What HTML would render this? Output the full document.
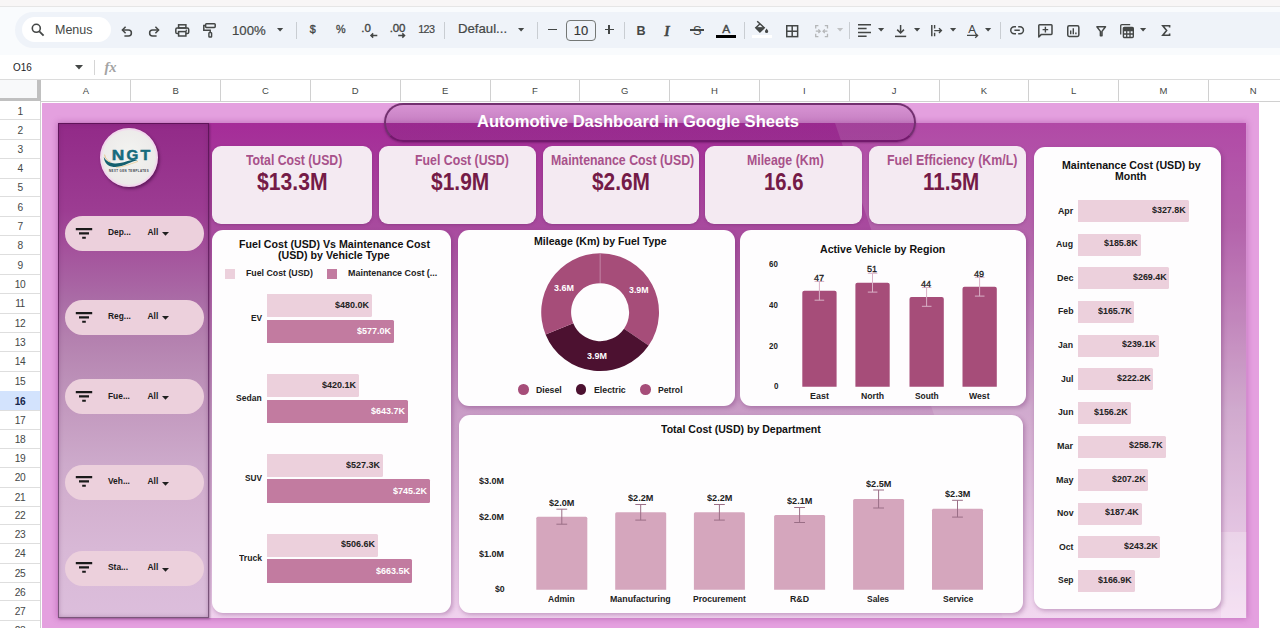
<!DOCTYPE html>
<html><head><meta charset="utf-8"><title>Automotive Dashboard</title>
<style>
*{box-sizing:border-box;margin:0;padding:0}
html,body{width:1280px;height:628px;overflow:hidden;background:#fff;font-family:"Liberation Sans",sans-serif;}
body{position:relative}
.abs{position:absolute}
.t{position:absolute;white-space:nowrap;line-height:1}
.c{text-align:center}
.b{font-weight:bold}
.card{position:absolute;background:#fefdfe;border-radius:11px;box-shadow:1.5px 2px 4px rgba(100,30,100,.3)}
.kpi{position:absolute;background:#f4eaf2;border-radius:9px;box-shadow:0 1px 3px rgba(90,30,90,.3)}
.pill{position:absolute;left:65px;width:139px;height:35px;border-radius:18px;background:#ecd0dc}
.sep{position:absolute;top:21px;width:1px;height:18px;background:#c7c7c7}
svg{position:absolute;overflow:visible}
</style></head><body>

<div class="abs" style="left:0;top:0;width:1280px;height:7px;background:#f8f6f6"></div>
<div class="abs" style="left:0;top:6px;width:1280px;height:1px;background:#e6e6e6"></div>
<div class="abs" style="left:0;top:7px;width:1280px;height:48px;background:#f9fbfd"></div>
<div class="abs" style="left:15px;top:12px;width:1300px;height:36px;background:#eff3f9;border-radius:18px"></div>
<div class="abs" style="left:22px;top:17px;width:89px;height:25px;background:#fff;border-radius:13px"></div>
<div class="abs" style="left:0;top:55px;width:1280px;height:25px;background:#fff"></div>
<div class="abs" style="left:0;top:79px;width:1280px;height:1px;background:#dcdcdc"></div>
<svg style="left:31px;top:23px" width="14" height="14" viewBox="0 0 14 14"><circle cx="5.3" cy="5.3" r="4" fill="none" stroke="#444746" stroke-width="1.6"/><path d="M8.3 8.3L12.6 12.6" stroke="#444746" stroke-width="1.8" stroke-linecap="butt"/></svg>
<div class="t" style="left:54.50px;top:22.90px;font-size:13.4px;font-weight:normal;color:#444746;transform:scaleX(0.9325);transform-origin:0 0;">Menus</div>
<svg style="left:120.5px;top:26px" width="12" height="11" viewBox="0 0 12 11"><path d="M4.6 0.8L1.4 4l3.2 3.2" fill="none" stroke="#444746" stroke-width="1.5"/><path d="M1.6 4H7.4a3 3 0 0 1 0 6H3.4" fill="none" stroke="#444746" stroke-width="1.5"/></svg>
<svg style="left:148px;top:26px" width="12" height="11" viewBox="0 0 12 11"><path d="M7.4 0.8L10.6 4l-3.2 3.2" fill="none" stroke="#444746" stroke-width="1.5"/><path d="M10.4 4H4.6a3 3 0 0 0 0 6H8.6" fill="none" stroke="#444746" stroke-width="1.5"/></svg>
<svg style="left:175px;top:24px" width="14.5" height="13" viewBox="0 0 14.5 13"><rect x="3.6" y="0.8" width="7.3" height="3.2" fill="none" stroke="#444746" stroke-width="1.5"/><rect x="0.8" y="4" width="12.9" height="5.6" rx="1.4" fill="none" stroke="#444746" stroke-width="1.5"/><rect x="3.6" y="7.6" width="7.3" height="4.4" fill="#eff3f9" stroke="#444746" stroke-width="1.5"/><circle cx="11.3" cy="6.2" r="0.8" fill="#444746"/></svg>
<svg style="left:202.5px;top:23.2px" width="13.5" height="15" viewBox="0 0 13.5 15"><rect x="2.6" y="0.8" width="9.6" height="3.6" rx="0.8" fill="none" stroke="#444746" stroke-width="1.5"/><path d="M2.6 2.6H0.8V7.2H7.2V9.6" fill="none" stroke="#444746" stroke-width="1.5"/><rect x="5.9" y="9.6" width="2.7" height="4.4" rx="0.6" fill="none" stroke="#444746" stroke-width="1.4"/></svg>
<div class="t" style="left:232px;top:23.6px;font-size:13.2px;-webkit-text-stroke:.2px #444746;color:#444746">100%</div>
<svg style="left:276.8px;top:27.8px" width="6.2" height="3.8" viewBox="0 0 6.2 3.8"><path d="M0 0h6.2l-3.1 3.6z" fill="#444746"/></svg>
<div class="abs" style="left:295.5px;top:21.5px;width:1px;height:17px;background:#c9cdd2"></div>
<div class="t" style="left:309.7px;top:23.8px;font-size:10.8px;-webkit-text-stroke:.35px #444746;color:#444746">$</div>
<div class="t" style="left:336px;top:24px;font-size:10.8px;-webkit-text-stroke:.3px #444746;color:#444746">%</div>
<div class="t" style="left:361.3px;top:22.8px;font-size:11.5px;-webkit-text-stroke:.35px #444746;color:#444746">.0</div>
<svg style="left:369.5px;top:33px" width="7.5" height="5" viewBox="0 0 7.5 5"><path d="M7.3 2.5H1.2M3.2 0.4L1 2.5l2.2 2.1" fill="none" stroke="#444746" stroke-width="1.5"/></svg>
<div class="t" style="left:389.8px;top:22.8px;font-size:11.5px;letter-spacing:-.2px;-webkit-text-stroke:.35px #444746;color:#444746">.00</div>
<svg style="left:397.5px;top:33px" width="7.5" height="5" viewBox="0 0 7.5 5"><path d="M0.2 2.5H6.3M4.3 0.4L6.5 2.5l-2.2 2.1" fill="none" stroke="#444746" stroke-width="1.5"/></svg>
<div class="t" style="left:418.3px;top:24px;font-size:10.8px;letter-spacing:-.7px;-webkit-text-stroke:.2px #444746;color:#444746">123</div>
<div class="abs" style="left:444px;top:21.5px;width:1px;height:17px;background:#c9cdd2"></div>
<div class="t" style="left:458px;top:22.4px;font-size:13.2px;-webkit-text-stroke:.2px #444746;color:#444746">Defaul...</div>
<svg style="left:517.9px;top:27.8px" width="6.2" height="3.8" viewBox="0 0 6.2 3.8"><path d="M0 0h6.2l-3.1 3.6z" fill="#444746"/></svg>
<div class="abs" style="left:537.3px;top:21.5px;width:1px;height:17px;background:#c9cdd2"></div>
<div class="abs" style="left:547.8px;top:29.2px;width:8.8px;height:1.25px;background:#444746"></div>
<div class="abs" style="left:566.2px;top:20px;width:29.5px;height:20.6px;border:1px solid #747775;border-radius:4px"></div>
<div class="t c" style="left:566.2px;width:29.5px;top:23.6px;font-size:13px;-webkit-text-stroke:.15px #333;color:#333">10</div>
<div class="abs" style="left:604.5px;top:29.2px;width:9px;height:1.25px;background:#444746"></div>
<div class="abs" style="left:608.4px;top:25.3px;width:1.25px;height:9px;background:#444746"></div>
<div class="abs" style="left:623.6px;top:21.5px;width:1px;height:17px;background:#c9cdd2"></div>
<div class="t b" style="left:636.5px;top:24.6px;font-size:12.6px;color:#444746">B</div>
<div class="t b" style="left:664.3px;top:23.8px;font-size:14.2px;-webkit-text-stroke:.3px #444746;font-style:italic;color:#444746;font-family:'Liberation Serif',serif">I</div>
<div class="t" style="left:693px;top:24.8px;font-size:12.8px;color:#444746">S</div>
<div class="abs" style="left:690px;top:29.2px;width:14px;height:1.4px;background:#444746"></div>
<div class="t" style="left:722.2px;top:24.4px;font-size:11.8px;-webkit-text-stroke:.4px #444746;color:#444746">A</div>
<div class="abs" style="left:716.3px;top:35.4px;width:19.8px;height:3px;background:#000"></div>
<div class="abs" style="left:744.2px;top:21.5px;width:1px;height:17px;background:#c9cdd2"></div>
<svg style="left:0px;top:0px" width="1280" height="60" viewBox="0 0 1280 60"><path d="M757.2 21.2L764.2 27.8 759.9 31.9 755.8 27.8 759.6 24.2" fill="none" stroke="#444746" stroke-width="1.5"/><path d="M756 27.6H764L759.9 31.8z" fill="#444746" stroke="#444746" stroke-width="0.8"/><path d="M766.6 28.6c1 1.4 1.6 2.1 1.6 2.9a1.6 1.6 0 0 1-3.2 0c0-.8.6-1.5 1.6-2.9z" fill="#444746"/></svg>
<div class="abs" style="left:752.4px;top:35.4px;width:19.8px;height:3px;background:#fff"></div>
<svg style="left:786px;top:24.6px" width="12.4" height="12.4" viewBox="0 0 12.4 12.4"><rect x="0.75" y="0.75" width="10.9" height="10.9" fill="none" stroke="#444746" stroke-width="1.5"/><path d="M6.2 0.8V11.6M0.8 6.2H11.6" stroke="#444746" stroke-width="1.5"/></svg>
<svg style="left:814.8px;top:24.6px" width="13.2" height="12.4" viewBox="0 0 13.2 12.4"><path d="M3.4 0.7H0.7V3.6M9.8 0.7h2.7V3.6M3.4 11.7H0.7V8.8M9.8 11.7h2.7V8.8" fill="none" stroke="#b4b6b8" stroke-width="1.3"/><path d="M0.8 6.2H5M3.4 4.4L5.2 6.2 3.4 8M12.4 6.2H8.2M9.8 4.4L8 6.2 9.8 8" fill="none" stroke="#b4b6b8" stroke-width="1.2"/></svg>
<svg style="left:836.6px;top:27.8px" width="6.2" height="3.8" viewBox="0 0 6.2 3.8"><path d="M0 0h6.2l-3.1 3.6z" fill="#c0c2c4"/></svg>
<div class="abs" style="left:849px;top:21.5px;width:1px;height:17px;background:#c9cdd2"></div>
<svg style="left:858px;top:24.4px" width="13" height="13" viewBox="0 0 13 13"><path d="M0 0.8H13M0 4.6H8.6M0 8.4H13M0 12.2H8.6" stroke="#444746" stroke-width="1.5"/></svg>
<svg style="left:877.5px;top:27.8px" width="6.2" height="3.8" viewBox="0 0 6.2 3.8"><path d="M0 0h6.2l-3.1 3.6z" fill="#444746"/></svg>
<svg style="left:894.6px;top:24.6px" width="11.2" height="12.4" viewBox="0 0 11.2 12.4"><path d="M5.6 0V7.6M2.2 4.6L5.6 8l3.4-3.4" fill="none" stroke="#444746" stroke-width="1.5"/><path d="M0 11.4H11.2" stroke="#444746" stroke-width="1.5"/></svg>
<svg style="left:913.7px;top:27.8px" width="6.2" height="3.8" viewBox="0 0 6.2 3.8"><path d="M0 0h6.2l-3.1 3.6z" fill="#444746"/></svg>
<svg style="left:930.5px;top:25px" width="11.4" height="11.2" viewBox="0 0 11.4 11.2"><path d="M0.8 0V11.2" stroke="#444746" stroke-width="1.5"/><path d="M3.6 0V3.4M3.6 7.8V11.2" stroke="#444746" stroke-width="1.4"/><path d="M3.2 5.6H10.4M8 3.2L10.4 5.6 8 8" fill="none" stroke="#444746" stroke-width="1.4"/></svg>
<svg style="left:949.8px;top:27.8px" width="6.2" height="3.8" viewBox="0 0 6.2 3.8"><path d="M0 0h6.2l-3.1 3.6z" fill="#444746"/></svg>
<div class="t" style="left:968.3px;top:23.6px;font-size:11.5px;color:#444746">A</div>
<svg style="left:967.2px;top:32.5px" width="11.8" height="5" viewBox="0 0 11.8 5"><path d="M0 2.4H10.2M8.2 0.3L10.6 2.5 8.2 4.7" fill="none" stroke="#444746" stroke-width="1.3"/></svg>
<svg style="left:985.3px;top:27.8px" width="6.2" height="3.8" viewBox="0 0 6.2 3.8"><path d="M0 0h6.2l-3.1 3.6z" fill="#444746"/></svg>
<div class="abs" style="left:999.6px;top:21.5px;width:1px;height:17px;background:#c9cdd2"></div>
<svg style="left:1010px;top:26.2px" width="14.2" height="8.6" viewBox="0 0 14.2 8.6"><path d="M6 0.8H4.2a3.4 3.4 0 0 0 0 6.9H6M8.2 0.8H10a3.4 3.4 0 0 1 0 6.9H8.2M4.4 4.25H9.8" fill="none" stroke="#444746" stroke-width="1.5"/></svg>
<svg style="left:1037.5px;top:24px" width="14.8" height="13.8" viewBox="0 0 14.8 13.8"><path d="M0.8 13V1.6Q0.8 0.8 1.6 0.8H13.2Q14 0.8 14 1.6V9.6Q14 10.4 13.2 10.4H3.4z" fill="none" stroke="#444746" stroke-width="1.5" stroke-linejoin="round"/><path d="M7.4 2.8V8.4M4.6 5.6H10.2" stroke="#444746" stroke-width="1.4"/></svg>
<svg style="left:1067px;top:24.6px" width="12.6" height="12.2" viewBox="0 0 12.6 12.2"><rect x="0.75" y="0.75" width="11.1" height="10.7" rx="1.4" fill="none" stroke="#444746" stroke-width="1.5"/><path d="M3.7 5.4V9.2M6.3 3.2V9.2M8.9 7.4V9.2" stroke="#444746" stroke-width="1.4"/></svg>
<svg style="left:1096.3px;top:25.6px" width="10.4" height="10.6" viewBox="0 0 10.4 10.6"><path d="M0.9 0.8H9.5L6 5.4V9.8H4.4V5.4z" fill="none" stroke="#444746" stroke-width="1.5" stroke-linejoin="round"/></svg>
<svg style="left:1120.2px;top:23.6px" width="14" height="14.2" viewBox="0 0 14 14.2"><path d="M0.7 10.4V1.8Q0.7 0.7 1.8 0.7H10.2" fill="none" stroke="#444746" stroke-width="1.3"/><rect x="3.4" y="3.4" width="9.9" height="10.1" rx="1" fill="none" stroke="#444746" stroke-width="1.4"/><path d="M3.4 6.6H13.3M3.4 10H13.3M6.7 6.6V13.5M10 6.6V13.5" stroke="#444746" stroke-width="1.3"/><rect x="3.4" y="3.4" width="9.9" height="3.2" fill="#444746"/></svg>
<svg style="left:1140.4px;top:27.8px" width="6.2" height="3.8" viewBox="0 0 6.2 3.8"><path d="M0 0h6.2l-3.1 3.6z" fill="#444746"/></svg>
<svg style="left:1162.3px;top:24.9px" width="8" height="11" viewBox="0 0 8 11"><path d="M7.6 2.4V0.8H0.8L4.6 5.5 0.8 10.2H7.6V8.6" fill="none" stroke="#444746" stroke-width="1.6" stroke-linejoin="miter"/></svg>
<div class="t" style="left:13.00px;top:62.00px;font-size:11.8px;font-weight:normal;color:#202124;transform:scaleX(0.8429);transform-origin:0 0;">O16</div>
<svg style="left:75px;top:65px" width="8" height="5"><path d="M0 0h8l-4 4.5z" fill="#444746"/></svg>
<div class="abs" style="left:94px;top:60px;width:1px;height:15px;background:#d5d5d5"></div>
<div class="t" style="left:104.5px;top:60.4px;font-size:14.5px;font-style:italic;font-weight:bold;color:#a3a3a3;font-family:'Liberation Serif',serif">fx</div>
<div class="abs" style="left:0;top:80px;width:1280px;height:21px;background:#fff"></div>
<div class="abs" style="left:0;top:80px;width:41px;height:21px;background:#f8f9fa"></div>
<div class="abs" style="left:37px;top:80px;width:4px;height:21px;background:#c0c0c0"></div>
<div class="abs" style="left:0;top:98px;width:41px;height:3px;background:#c0c0c0"></div>
<div class="abs" style="left:130.3px;top:80px;width:1px;height:21px;background:#d0d0d0"></div>
<div class="t c" style="left:41.0px;width:89.8px;top:85.9px;font-size:9.5px;color:#444746">A</div>
<div class="abs" style="left:220.1px;top:80px;width:1px;height:21px;background:#d0d0d0"></div>
<div class="t c" style="left:130.8px;width:89.8px;top:85.9px;font-size:9.5px;color:#444746">B</div>
<div class="abs" style="left:309.9px;top:80px;width:1px;height:21px;background:#d0d0d0"></div>
<div class="t c" style="left:220.6px;width:89.8px;top:85.9px;font-size:9.5px;color:#444746">C</div>
<div class="abs" style="left:399.7px;top:80px;width:1px;height:21px;background:#d0d0d0"></div>
<div class="t c" style="left:310.4px;width:89.8px;top:85.9px;font-size:9.5px;color:#444746">D</div>
<div class="abs" style="left:489.5px;top:80px;width:1px;height:21px;background:#d0d0d0"></div>
<div class="t c" style="left:400.2px;width:89.8px;top:85.9px;font-size:9.5px;color:#444746">E</div>
<div class="abs" style="left:579.3px;top:80px;width:1px;height:21px;background:#d0d0d0"></div>
<div class="t c" style="left:490.0px;width:89.8px;top:85.9px;font-size:9.5px;color:#444746">F</div>
<div class="abs" style="left:669.1px;top:80px;width:1px;height:21px;background:#d0d0d0"></div>
<div class="t c" style="left:579.8px;width:89.8px;top:85.9px;font-size:9.5px;color:#444746">G</div>
<div class="abs" style="left:758.9px;top:80px;width:1px;height:21px;background:#d0d0d0"></div>
<div class="t c" style="left:669.6px;width:89.8px;top:85.9px;font-size:9.5px;color:#444746">H</div>
<div class="abs" style="left:848.7px;top:80px;width:1px;height:21px;background:#d0d0d0"></div>
<div class="t c" style="left:759.4px;width:89.8px;top:85.9px;font-size:9.5px;color:#444746">I</div>
<div class="abs" style="left:938.5px;top:80px;width:1px;height:21px;background:#d0d0d0"></div>
<div class="t c" style="left:849.2px;width:89.8px;top:85.9px;font-size:9.5px;color:#444746">J</div>
<div class="abs" style="left:1028.3px;top:80px;width:1px;height:21px;background:#d0d0d0"></div>
<div class="t c" style="left:939.0px;width:89.8px;top:85.9px;font-size:9.5px;color:#444746">K</div>
<div class="abs" style="left:1118.1px;top:80px;width:1px;height:21px;background:#d0d0d0"></div>
<div class="t c" style="left:1028.8px;width:89.8px;top:85.9px;font-size:9.5px;color:#444746">L</div>
<div class="abs" style="left:1207.9px;top:80px;width:1px;height:21px;background:#d0d0d0"></div>
<div class="t c" style="left:1118.6px;width:89.8px;top:85.9px;font-size:9.5px;color:#444746">M</div>
<div class="abs" style="left:1297.7px;top:80px;width:1px;height:21px;background:#d0d0d0"></div>
<div class="t c" style="left:1208.4px;width:89.8px;top:85.9px;font-size:9.5px;color:#444746">N</div>
<div class="abs" style="left:41px;top:100.5px;width:1239px;height:1px;background:#d0d0d0"></div>
<div class="abs" style="left:0;top:101px;width:40px;height:527px;background:#fff"></div>
<div class="abs" style="left:40px;top:101px;width:1px;height:527px;background:#d0d0d0"></div>
<div class="abs" style="left:0;top:119.4px;width:40px;height:1px;background:#dedede"></div>
<div class="t c" style="left:0;width:40px;top:106.6px;font-size:10.2px;letter-spacing:-.45px;color:#444746">1</div>
<div class="abs" style="left:0;top:138.8px;width:40px;height:1px;background:#dedede"></div>
<div class="t c" style="left:0;width:40px;top:125.5px;font-size:10.2px;letter-spacing:-.45px;color:#444746">2</div>
<div class="abs" style="left:0;top:158.1px;width:40px;height:1px;background:#dedede"></div>
<div class="t c" style="left:0;width:40px;top:144.8px;font-size:10.2px;letter-spacing:-.45px;color:#444746">3</div>
<div class="abs" style="left:0;top:177.5px;width:40px;height:1px;background:#dedede"></div>
<div class="t c" style="left:0;width:40px;top:164.2px;font-size:10.2px;letter-spacing:-.45px;color:#444746">4</div>
<div class="abs" style="left:0;top:196.4px;width:40px;height:1px;background:#dedede"></div>
<div class="t c" style="left:0;width:40px;top:183.3px;font-size:10.2px;letter-spacing:-.45px;color:#444746">5</div>
<div class="abs" style="left:0;top:215.7px;width:40px;height:1px;background:#dedede"></div>
<div class="t c" style="left:0;width:40px;top:202.5px;font-size:10.2px;letter-spacing:-.45px;color:#444746">6</div>
<div class="abs" style="left:0;top:235.1px;width:40px;height:1px;background:#dedede"></div>
<div class="t c" style="left:0;width:40px;top:221.8px;font-size:10.2px;letter-spacing:-.45px;color:#444746">7</div>
<div class="abs" style="left:0;top:254.4px;width:40px;height:1px;background:#dedede"></div>
<div class="t c" style="left:0;width:40px;top:241.2px;font-size:10.2px;letter-spacing:-.45px;color:#444746">8</div>
<div class="abs" style="left:0;top:273.8px;width:40px;height:1px;background:#dedede"></div>
<div class="t c" style="left:0;width:40px;top:260.5px;font-size:10.2px;letter-spacing:-.45px;color:#444746">9</div>
<div class="abs" style="left:0;top:293.1px;width:40px;height:1px;background:#dedede"></div>
<div class="t c" style="left:0;width:40px;top:279.9px;font-size:10.2px;letter-spacing:-.45px;color:#444746">10</div>
<div class="abs" style="left:0;top:312.5px;width:40px;height:1px;background:#dedede"></div>
<div class="t c" style="left:0;width:40px;top:299.2px;font-size:10.2px;letter-spacing:-.45px;color:#444746">11</div>
<div class="abs" style="left:0;top:331.8px;width:40px;height:1px;background:#dedede"></div>
<div class="t c" style="left:0;width:40px;top:318.5px;font-size:10.2px;letter-spacing:-.45px;color:#444746">12</div>
<div class="abs" style="left:0;top:351.2px;width:40px;height:1px;background:#dedede"></div>
<div class="t c" style="left:0;width:40px;top:337.9px;font-size:10.2px;letter-spacing:-.45px;color:#444746">13</div>
<div class="abs" style="left:0;top:370.7px;width:40px;height:1px;background:#dedede"></div>
<div class="t c" style="left:0;width:40px;top:357.3px;font-size:10.2px;letter-spacing:-.45px;color:#444746">14</div>
<div class="abs" style="left:0;top:390.7px;width:40px;height:1px;background:#dedede"></div>
<div class="t c" style="left:0;width:40px;top:377.1px;font-size:10.2px;letter-spacing:-.45px;color:#444746">15</div>
<div class="abs" style="left:0;top:391.2px;width:40px;height:19.1px;background:#d3e3fd"></div>
<div class="abs" style="left:0;top:409.8px;width:40px;height:1px;background:#dedede"></div>
<div class="t c" style="left:0;width:40px;top:396.6px;font-size:10.2px;letter-spacing:-.45px;font-weight:bold;color:#16264a">16</div>
<div class="abs" style="left:0;top:428.7px;width:40px;height:1px;background:#dedede"></div>
<div class="t c" style="left:0;width:40px;top:415.6px;font-size:10.2px;letter-spacing:-.45px;color:#444746">17</div>
<div class="abs" style="left:0;top:447.8px;width:40px;height:1px;background:#dedede"></div>
<div class="t c" style="left:0;width:40px;top:434.6px;font-size:10.2px;letter-spacing:-.45px;color:#444746">18</div>
<div class="abs" style="left:0;top:467.1px;width:40px;height:1px;background:#dedede"></div>
<div class="t c" style="left:0;width:40px;top:453.9px;font-size:10.2px;letter-spacing:-.45px;color:#444746">19</div>
<div class="abs" style="left:0;top:486.5px;width:40px;height:1px;background:#dedede"></div>
<div class="t c" style="left:0;width:40px;top:473.2px;font-size:10.2px;letter-spacing:-.45px;color:#444746">20</div>
<div class="abs" style="left:0;top:505.8px;width:40px;height:1px;background:#dedede"></div>
<div class="t c" style="left:0;width:40px;top:492.5px;font-size:10.2px;letter-spacing:-.45px;color:#444746">21</div>
<div class="abs" style="left:0;top:524.3px;width:40px;height:1px;background:#dedede"></div>
<div class="t c" style="left:0;width:40px;top:511.4px;font-size:10.2px;letter-spacing:-.45px;color:#444746">22</div>
<div class="abs" style="left:0;top:543.2px;width:40px;height:1px;background:#dedede"></div>
<div class="t c" style="left:0;width:40px;top:530.1px;font-size:10.2px;letter-spacing:-.45px;color:#444746">23</div>
<div class="abs" style="left:0;top:562.6px;width:40px;height:1px;background:#dedede"></div>
<div class="t c" style="left:0;width:40px;top:549.3px;font-size:10.2px;letter-spacing:-.45px;color:#444746">24</div>
<div class="abs" style="left:0;top:581.9px;width:40px;height:1px;background:#dedede"></div>
<div class="t c" style="left:0;width:40px;top:568.6px;font-size:10.2px;letter-spacing:-.45px;color:#444746">25</div>
<div class="abs" style="left:0;top:600.4px;width:40px;height:1px;background:#dedede"></div>
<div class="t c" style="left:0;width:40px;top:587.5px;font-size:10.2px;letter-spacing:-.45px;color:#444746">26</div>
<div class="abs" style="left:0;top:619.8px;width:40px;height:1px;background:#dedede"></div>
<div class="t c" style="left:0;width:40px;top:606.5px;font-size:10.2px;letter-spacing:-.45px;color:#444746">27</div>
<div class="abs" style="left:0;top:639.0px;width:40px;height:1px;background:#dedede"></div>
<div class="t c" style="left:0;width:40px;top:625.8px;font-size:10.2px;letter-spacing:-.45px;color:#444746">28</div>
<div class="abs" style="left:41.6px;top:102.8px;width:1217.2px;height:526px;background:#e4a0df"></div>
<div class="abs" style="left:58px;top:123px;width:1188.4px;height:495px;background:linear-gradient(180deg,#a52c98 0%,#a84a9e 21%,#b974b2 40%,#c99cc6 58%,#f0d2ee 100%);box-shadow:0 0 6px 1px rgba(150,50,145,.4)"></div>
<svg style="left:0;top:0" width="1280" height="628"><polygon points="835,123 1246.4,123 1246.4,618 1003,618" fill="rgba(255,255,255,0.14)"/><rect x="1221" y="532" width="25.4" height="86" fill="rgba(255,255,255,0.25)"/></svg>
<div class="abs" style="left:58px;top:123px;width:151px;height:495px;background:linear-gradient(180deg,#922a88 0%,#9c3c92 17.6%,#a4529c 25.7%,#aa6ca6 35.8%,#b37fae 42.8%,#bc90b8 51.9%,#c49bc0 59%,#cdaacb 69%,#d3b0cf 76%,#d8b8d6 86%,#dcbedc 100%);box-shadow:inset 0 0 4px 1px rgba(90,30,90,.3),1px 1px 2px rgba(60,10,60,.4)"></div>
<div class="abs" style="left:58px;top:123px;width:151px;height:495px;border:1.7px solid;border-image:linear-gradient(180deg,#5f1459 0%,#6d2a69 35%,#77487a 65%,#7a567a 100%) 1"></div>
<div class="abs" style="left:384px;top:103.4px;width:532px;height:38.4px;border-radius:19.2px;border:2px solid #733070;border-bottom:2.8px solid #72196c;background:linear-gradient(180deg,rgba(105,30,105,.10) 0%,rgba(105,30,105,.19) 30%,rgba(105,30,105,.2) 100%);box-shadow:0 1px 2px rgba(60,0,60,.35)"></div>
<div class="t" style="left:477.30px;top:114.00px;font-size:16.6px;font-weight:bold;color:#fff;transform:scaleX(0.9975);transform-origin:0 0;">Automotive Dashboard in Google Sheets</div>
<div class="abs" style="left:99.8px;top:127.6px;width:58.4px;height:59.4px;border-radius:50%;background:radial-gradient(circle at 50% 45%,#f3f4f1 0%,#eceae9 70%,#e4dfe0 100%);border:2px solid #f2d8ed;box-shadow:1.5px 2px 3px rgba(50,0,50,.5)"></div>
<svg style="left:0;top:0" width="1280" height="628"><path d="M103.8 156.8 C105.6 160.8,109.5 163.2,115 163.4 C121 163.6,126.5 161,131 160.2 C133.5 159.8,135.8 159.9,137.8 160.3 C134.5 160.8,131.5 161.9,128 163.6 C123 166,118 167.4,113.5 167 C107.6 166.4,104 162.4,103.8 156.8Z" fill="#15606f"/><path d="M104.6 154.6 C105 158.2,107.5 161,110.8 162.2" fill="none" stroke="#e8b768" stroke-width="0.7"/><path d="M116 167.4 C123 167.2,129 164.4,138 161.4" fill="none" stroke="#eac58a" stroke-width="0.7"/><g font-family="Liberation Sans, sans-serif" font-weight="bold" font-size="15.2" fill="#166c7d" stroke="#166c7d" stroke-width="0.5"><text transform="translate(111.7,160.2) scale(1.14,1)">N</text><text transform="translate(126.5,160.2) scale(1.0,1)">G</text><text transform="translate(140.5,160.2) scale(1.05,1)">T</text></g></svg>
<svg style="left:0;top:0" width="1280" height="628"><text x="109.1" y="172" font-family="Liberation Sans, sans-serif" font-weight="bold" font-size="2.9" textLength="39.5" lengthAdjust="spacing" fill="#3a3f4e">NEXT GEN TEMPLATES</text></svg>
<div class="pill" style="top:216.3px"></div>
<svg style="left:76px;top:228.3px" width="16" height="11" viewBox="0 0 16 11"><path d="M-0.2 0h16.4v2.2H-0.2zM3 4.2h10v2.2H3zM6.2 8.8h3.6v2H6.2z" fill="#1a1a1a"/></svg>
<div class="t b" style="left:108px;top:227.8px;font-size:8.4px;color:#1a1a1a">Dep...</div>
<div class="t b" style="left:147.5px;top:227.8px;font-size:8.4px;color:#1a1a1a">All</div>
<svg style="left:162px;top:232.4px" width="7" height="4"><path d="M0 0h7l-3.5 3.8z" fill="#1f1f1f"/></svg>
<div class="pill" style="top:300.3px"></div>
<svg style="left:76px;top:312.3px" width="16" height="11" viewBox="0 0 16 11"><path d="M-0.2 0h16.4v2.2H-0.2zM3 4.2h10v2.2H3zM6.2 8.8h3.6v2H6.2z" fill="#1a1a1a"/></svg>
<div class="t b" style="left:108px;top:311.8px;font-size:8.4px;color:#1a1a1a">Reg...</div>
<div class="t b" style="left:147.5px;top:311.8px;font-size:8.4px;color:#1a1a1a">All</div>
<svg style="left:162px;top:316.4px" width="7" height="4"><path d="M0 0h7l-3.5 3.8z" fill="#1f1f1f"/></svg>
<div class="pill" style="top:378.9px"></div>
<svg style="left:76px;top:390.9px" width="16" height="11" viewBox="0 0 16 11"><path d="M-0.2 0h16.4v2.2H-0.2zM3 4.2h10v2.2H3zM6.2 8.8h3.6v2H6.2z" fill="#1a1a1a"/></svg>
<div class="t b" style="left:108px;top:391.7px;font-size:8.4px;color:#1a1a1a">Fue...</div>
<div class="t b" style="left:147.5px;top:391.7px;font-size:8.4px;color:#1a1a1a">All</div>
<svg style="left:162px;top:395.8px" width="7" height="4"><path d="M0 0h7l-3.5 3.8z" fill="#1f1f1f"/></svg>
<div class="pill" style="top:464.7px"></div>
<svg style="left:76px;top:476.0px" width="16" height="11" viewBox="0 0 16 11"><path d="M-0.2 0h16.4v2.2H-0.2zM3 4.2h10v2.2H3zM6.2 8.8h3.6v2H6.2z" fill="#1a1a1a"/></svg>
<div class="t b" style="left:108px;top:477.4px;font-size:8.4px;color:#1a1a1a">Veh...</div>
<div class="t b" style="left:147.5px;top:477.4px;font-size:8.4px;color:#1a1a1a">All</div>
<svg style="left:162px;top:481.5px" width="7" height="4"><path d="M0 0h7l-3.5 3.8z" fill="#1f1f1f"/></svg>
<div class="pill" style="top:550.8px"></div>
<svg style="left:76px;top:562.3px" width="16" height="11" viewBox="0 0 16 11"><path d="M-0.2 0h16.4v2.2H-0.2zM3 4.2h10v2.2H3zM6.2 8.8h3.6v2H6.2z" fill="#1a1a1a"/></svg>
<div class="t b" style="left:108px;top:563.3px;font-size:8.4px;color:#1a1a1a">Sta...</div>
<div class="t b" style="left:147.5px;top:563.3px;font-size:8.4px;color:#1a1a1a">All</div>
<svg style="left:162px;top:567.5px" width="7" height="4"><path d="M0 0h7l-3.5 3.8z" fill="#1f1f1f"/></svg>
<div class="kpi" style="left:212px;top:146.3px;width:160.2px;height:77.7px"></div>
<div class="t" style="left:246.25px;top:153.90px;font-size:13.8px;font-weight:bold;color:#a8518a;transform:scaleX(0.8863);transform-origin:0 0;">Total Cost (USD)</div>
<div class="t" style="left:257.00px;top:170.60px;font-size:23.6px;font-weight:bold;color:#741b47;transform:scaleX(0.8956);transform-origin:0 0;">$13.3M</div>
<div class="kpi" style="left:378.7px;top:146.3px;width:157.6px;height:77.7px"></div>
<div class="t" style="left:414.50px;top:153.90px;font-size:13.8px;font-weight:bold;color:#a8518a;transform:scaleX(0.8927);transform-origin:0 0;">Fuel Cost (USD)</div>
<div class="t" style="left:430.50px;top:170.60px;font-size:23.6px;font-weight:bold;color:#741b47;transform:scaleX(0.8881);transform-origin:0 0;">$1.9M</div>
<div class="kpi" style="left:543px;top:146.3px;width:155.8px;height:77.7px"></div>
<div class="t" style="left:551.25px;top:153.90px;font-size:13.8px;font-weight:bold;color:#a8518a;transform:scaleX(0.8940);transform-origin:0 0;">Maintenance Cost (USD)</div>
<div class="t" style="left:592.00px;top:170.60px;font-size:23.6px;font-weight:bold;color:#741b47;transform:scaleX(0.8843);transform-origin:0 0;">$2.6M</div>
<div class="kpi" style="left:705px;top:146.3px;width:157.0px;height:77.7px"></div>
<div class="t" style="left:747.00px;top:153.90px;font-size:13.8px;font-weight:bold;color:#a8518a;transform:scaleX(0.8938);transform-origin:0 0;">Mileage (Km)</div>
<div class="t" style="left:764.25px;top:170.60px;font-size:23.6px;font-weight:bold;color:#741b47;transform:scaleX(0.8600);transform-origin:0 0;">16.6</div>
<div class="kpi" style="left:869.2px;top:146.3px;width:157.0px;height:77.7px"></div>
<div class="t" style="left:887.00px;top:153.90px;font-size:13.8px;font-weight:bold;color:#a8518a;transform:scaleX(0.9005);transform-origin:0 0;">Fuel Efficiency (Km/L)</div>
<div class="t" style="left:923.00px;top:170.60px;font-size:23.6px;font-weight:bold;color:#741b47;transform:scaleX(0.8750);transform-origin:0 0;">11.5M</div>
<div class="card" style="left:212px;top:230px;width:239px;height:383px"></div>
<div class="t" style="left:238.70px;top:239.30px;font-size:10.6px;font-weight:bold;color:#111;transform:scaleX(1.0046);transform-origin:0 0;">Fuel Cost (USD) Vs Maintenance Cost</div>
<div class="t" style="left:277.80px;top:249.60px;font-size:10.6px;font-weight:bold;color:#111;transform:scaleX(1.0060);transform-origin:0 0;">(USD) by Vehicle Type</div>
<div class="abs" style="left:224.9px;top:268.7px;width:10.5px;height:10.5px;background:#ecd0dc"></div>
<div class="t" style="left:245.70px;top:269.30px;font-size:9.2px;font-weight:bold;color:#222;transform:scaleX(0.9556);transform-origin:0 0;">Fuel Cost (USD)</div>
<div class="abs" style="left:327px;top:268.7px;width:10.3px;height:10.5px;background:#c27ba0"></div>
<div class="t" style="left:347.60px;top:269.30px;font-size:9.2px;font-weight:bold;color:#222;transform:scaleX(0.9717);transform-origin:0 0;">Maintenance Cost (...</div>
<div class="abs" style="left:266.9px;top:293.9px;width:105.4px;height:23.5px;background:#ecd0dc;border-radius:0 1.5px 1.5px 0"></div>
<div class="abs" style="left:266.9px;top:319.7px;width:126.7px;height:23.4px;background:#c27ba0;border-radius:0 1.5px 1.5px 0"></div>
<div class="t" style="left:335.26px;top:300.75px;font-size:9.3px;font-weight:bold;color:#222;transform:scaleX(0.9662);transform-origin:0 0;">$480.0K</div>
<div class="t" style="left:356.55px;top:326.95px;font-size:9.3px;font-weight:bold;color:#fff;transform:scaleX(0.9662);transform-origin:0 0;">$577.0K</div>
<div class="t" style="left:250.90px;top:313.00px;font-size:9.6px;font-weight:bold;color:#222;transform:scaleX(0.8669);transform-origin:0 0;">EV</div>
<div class="abs" style="left:266.9px;top:373.8px;width:92.2px;height:23.5px;background:#ecd0dc;border-radius:0 1.5px 1.5px 0"></div>
<div class="abs" style="left:266.9px;top:399.6px;width:141.3px;height:23.4px;background:#c27ba0;border-radius:0 1.5px 1.5px 0"></div>
<div class="t" style="left:322.11px;top:380.65px;font-size:9.3px;font-weight:bold;color:#222;transform:scaleX(0.9662);transform-origin:0 0;">$420.1K</div>
<div class="t" style="left:371.19px;top:406.85px;font-size:9.3px;font-weight:bold;color:#fff;transform:scaleX(0.9662);transform-origin:0 0;">$643.7K</div>
<div class="t" style="left:236.40px;top:392.90px;font-size:9.6px;font-weight:bold;color:#222;transform:scaleX(0.8887);transform-origin:0 0;">Sedan</div>
<div class="abs" style="left:266.9px;top:453.65px;width:115.7px;height:23.5px;background:#ecd0dc;border-radius:0 1.5px 1.5px 0"></div>
<div class="abs" style="left:266.9px;top:479.4px;width:163.6px;height:23.4px;background:#c27ba0;border-radius:0 1.5px 1.5px 0"></div>
<div class="t" style="left:345.64px;top:460.50px;font-size:9.3px;font-weight:bold;color:#222;transform:scaleX(0.9662);transform-origin:0 0;">$527.3K</div>
<div class="t" style="left:393.47px;top:486.70px;font-size:9.3px;font-weight:bold;color:#fff;transform:scaleX(0.9662);transform-origin:0 0;">$745.2K</div>
<div class="t" style="left:245.00px;top:472.75px;font-size:9.6px;font-weight:bold;color:#222;transform:scaleX(0.8614);transform-origin:0 0;">SUV</div>
<div class="abs" style="left:266.9px;top:533.5px;width:111.2px;height:23.5px;background:#ecd0dc;border-radius:0 1.5px 1.5px 0"></div>
<div class="abs" style="left:266.9px;top:559.3px;width:145.6px;height:23.4px;background:#c27ba0;border-radius:0 1.5px 1.5px 0"></div>
<div class="t" style="left:341.10px;top:540.35px;font-size:9.3px;font-weight:bold;color:#222;transform:scaleX(0.9662);transform-origin:0 0;">$506.6K</div>
<div class="t" style="left:375.54px;top:566.55px;font-size:9.3px;font-weight:bold;color:#fff;transform:scaleX(0.9662);transform-origin:0 0;">$663.5K</div>
<div class="t" style="left:239.00px;top:552.60px;font-size:9.6px;font-weight:bold;color:#222;transform:scaleX(0.8981);transform-origin:0 0;">Truck</div>
<div class="card" style="left:457.5px;top:229.8px;width:277px;height:176.4px"></div>
<div class="t" style="left:533.80px;top:236.30px;font-size:10.6px;font-weight:bold;color:#111;transform:scaleX(0.9984);transform-origin:0 0;">Mileage (Km) by Fuel Type</div>
<svg style="left:0;top:0" width="1280" height="628">
<path d="M600.10 253.30A58.9 58.9 0 0 1 648.64 345.56L624.00 328.63A29 29 0 0 0 600.10 283.20Z" fill="#a64d79"/>
<path d="M648.64 345.56A58.9 58.9 0 0 1 545.57 334.45L573.25 323.16A29 29 0 0 0 624.00 328.63Z" fill="#4c1130"/>
<path d="M545.57 334.45A58.9 58.9 0 0 1 600.10 253.30L600.10 283.20A29 29 0 0 0 573.25 323.16Z" fill="#a64d79"/>
<line x1="600.1" y1="253.29999999999998" x2="600.1" y2="283.2" stroke="#c48aa8" stroke-width="0.8"/>
</svg>
<div class="t" style="left:553.50px;top:284.15px;font-size:9.3px;font-weight:bold;color:#fff;transform:scaleX(0.9634);transform-origin:0 0;">3.6M</div>
<div class="t" style="left:628.80px;top:286.25px;font-size:9.3px;font-weight:bold;color:#fff;transform:scaleX(0.9487);transform-origin:0 0;">3.9M</div>
<div class="t" style="left:586.80px;top:351.65px;font-size:9.3px;font-weight:bold;color:#fff;transform:scaleX(0.9634);transform-origin:0 0;">3.9M</div>
<div class="abs" style="left:518.1px;top:384.1px;width:10.6px;height:10.6px;border-radius:50%;background:#a64d79"></div>
<div class="t" style="left:535.50px;top:384.90px;font-size:9.4px;font-weight:bold;color:#222;transform:scaleX(0.9318);transform-origin:0 0;">Diesel</div>
<div class="abs" style="left:575.7px;top:384.1px;width:10.6px;height:10.6px;border-radius:50%;background:#4c1130"></div>
<div class="t" style="left:593.50px;top:384.90px;font-size:9.4px;font-weight:bold;color:#222;transform:scaleX(0.9364);transform-origin:0 0;">Electric</div>
<div class="abs" style="left:640.0px;top:384.1px;width:10.6px;height:10.6px;border-radius:50%;background:#a64d79"></div>
<div class="t" style="left:657.80px;top:384.90px;font-size:9.4px;font-weight:bold;color:#222;transform:scaleX(0.9236);transform-origin:0 0;">Petrol</div>
<div class="card" style="left:740.4px;top:230.3px;width:285.4px;height:175.9px"></div>
<div class="t" style="left:820.00px;top:243.60px;font-size:10.6px;font-weight:bold;color:#111;transform:scaleX(0.9994);transform-origin:0 0;">Active Vehicle by Region</div>
<div class="t" style="left:769.30px;top:259.55px;font-size:9.3px;font-weight:bold;color:#222;transform:scaleX(0.8504);transform-origin:0 0;">60</div>
<div class="t" style="left:769.30px;top:300.65px;font-size:9.3px;font-weight:bold;color:#222;transform:scaleX(0.8504);transform-origin:0 0;">40</div>
<div class="t" style="left:769.30px;top:341.55px;font-size:9.3px;font-weight:bold;color:#222;transform:scaleX(0.8504);transform-origin:0 0;">20</div>
<div class="t" style="left:773.60px;top:381.55px;font-size:9.3px;font-weight:bold;color:#222;transform:scaleX(0.8602);transform-origin:0 0;">0</div>
<svg style="left:0;top:0" width="1280" height="628">
<path d="M802.3 386.7V292.8Q802.3 290.8 804.3 290.8H834.6Q836.6 290.8 836.6 292.8V386.7Z" fill="#a64d79"/>
<path d="M819.4 281.4V300.2M814.6 281.4h9.6M814.6 300.2h9.6" stroke="#d9b0c6" stroke-width="1" fill="none"/>
<path d="M855.4 386.7V284.7Q855.4 282.7 857.4 282.7H887.7Q889.7 282.7 889.7 284.7V386.7Z" fill="#a64d79"/>
<path d="M872.5 273.3V292.1M867.8 273.3h9.6M867.8 292.1h9.6" stroke="#d9b0c6" stroke-width="1" fill="none"/>
<path d="M909.5 386.7V298.9Q909.5 296.9 911.5 296.9H941.8Q943.8 296.9 943.8 298.9V386.7Z" fill="#a64d79"/>
<path d="M926.6 287.5V306.3M921.9 287.5h9.6M921.9 306.3h9.6" stroke="#d9b0c6" stroke-width="1" fill="none"/>
<path d="M962.5 386.7V288.7Q962.5 286.7 964.5 286.7H994.8Q996.8 286.7 996.8 288.7V386.7Z" fill="#a64d79"/>
<path d="M979.6 277.3V296.1M974.9 277.3h9.6M974.9 296.1h9.6" stroke="#d9b0c6" stroke-width="1" fill="none"/>
</svg>
<div class="t" style="left:813.75px;top:273.00px;font-size:9.6px;font-weight:normal;color:#1a1a1a;transform:scaleX(0.9461);transform-origin:0 0;-webkit-text-stroke:.3px #1a1a1a;">47</div>
<div class="t" style="left:809.80px;top:390.70px;font-size:9.4px;font-weight:bold;color:#222;transform:scaleX(0.9521);transform-origin:0 0;">East</div>
<div class="t" style="left:866.75px;top:263.80px;font-size:9.6px;font-weight:normal;color:#1a1a1a;transform:scaleX(0.9461);transform-origin:0 0;-webkit-text-stroke:.3px #1a1a1a;">51</div>
<div class="t" style="left:861.10px;top:390.70px;font-size:9.4px;font-weight:bold;color:#222;transform:scaleX(0.9260);transform-origin:0 0;">North</div>
<div class="t" style="left:921.25px;top:278.80px;font-size:9.6px;font-weight:normal;color:#1a1a1a;transform:scaleX(0.9461);transform-origin:0 0;-webkit-text-stroke:.3px #1a1a1a;">44</div>
<div class="t" style="left:914.70px;top:390.70px;font-size:9.4px;font-weight:bold;color:#222;transform:scaleX(0.8941);transform-origin:0 0;">South</div>
<div class="t" style="left:973.95px;top:268.70px;font-size:9.6px;font-weight:normal;color:#1a1a1a;transform:scaleX(0.9461);transform-origin:0 0;-webkit-text-stroke:.3px #1a1a1a;">49</div>
<div class="t" style="left:968.90px;top:390.70px;font-size:9.4px;font-weight:bold;color:#222;transform:scaleX(0.9245);transform-origin:0 0;">West</div>
<div class="card" style="left:459px;top:415px;width:563.6px;height:198.3px"></div>
<div class="t" style="left:661.40px;top:424.10px;font-size:10.6px;font-weight:bold;color:#111;transform:scaleX(0.9958);transform-origin:0 0;">Total Cost (USD) by Department</div>
<div class="t" style="left:479.10px;top:477.00px;font-size:9.2px;font-weight:bold;color:#222;transform:scaleX(0.9818);transform-origin:0 0;">$3.0M</div>
<div class="t" style="left:479.10px;top:513.40px;font-size:9.2px;font-weight:bold;color:#222;transform:scaleX(0.9818);transform-origin:0 0;">$2.0M</div>
<div class="t" style="left:479.10px;top:549.60px;font-size:9.2px;font-weight:bold;color:#222;transform:scaleX(0.9818);transform-origin:0 0;">$1.0M</div>
<div class="t" style="left:494.50px;top:585.00px;font-size:9.2px;font-weight:bold;color:#222;transform:scaleX(0.9481);transform-origin:0 0;">$0</div>
<svg style="left:0;top:0" width="1280" height="628">
<path d="M536.3 589.8V518.2Q536.3 516.7 537.8 516.7H585.8Q587.3 516.7 587.3 518.2V589.8Z" fill="#d5a6bd"/>
<path d="M561.8 509.2V524.2M556.4 509.2h10.8M556.4 524.2h10.8" stroke="#9a6e86" stroke-width="1" fill="none"/>
<path d="M615.2 589.8V513.8Q615.2 512.3 616.7 512.3H664.7Q666.2 512.3 666.2 513.8V589.8Z" fill="#d5a6bd"/>
<path d="M640.7 504.5V520.1M635.3 504.5h10.8M635.3 520.1h10.8" stroke="#9a6e86" stroke-width="1" fill="none"/>
<path d="M693.9 589.8V513.8Q693.9 512.3 695.4 512.3H743.4Q744.9 512.3 744.9 513.8V589.8Z" fill="#d5a6bd"/>
<path d="M719.4 504.5V520.1M714.0 504.5h10.8M714.0 520.1h10.8" stroke="#9a6e86" stroke-width="1" fill="none"/>
<path d="M774.1 589.8V516.5Q774.1 515.0 775.6 515.0H823.6Q825.1 515.0 825.1 516.5V589.8Z" fill="#d5a6bd"/>
<path d="M799.6 507.5V522.5M794.2 507.5h10.8M794.2 522.5h10.8" stroke="#9a6e86" stroke-width="1" fill="none"/>
<path d="M853.1 589.8V500.5Q853.1 499.0 854.6 499.0H902.6Q904.1 499.0 904.1 500.5V589.8Z" fill="#d5a6bd"/>
<path d="M878.6 490.0V508.0M873.2 490.0h10.8M873.2 508.0h10.8" stroke="#9a6e86" stroke-width="1" fill="none"/>
<path d="M932 589.8V510.2Q932 508.7 933.5 508.7H981.5Q983.0 508.7 983.0 510.2V589.8Z" fill="#d5a6bd"/>
<path d="M957.5 500.3V517.1M952.1 500.3h10.8M952.1 517.1h10.8" stroke="#9a6e86" stroke-width="1" fill="none"/>
</svg>
<div class="t" style="left:549.10px;top:498.70px;font-size:9.2px;font-weight:bold;color:#222;transform:scaleX(0.9936);transform-origin:0 0;">$2.0M</div>
<div class="t" style="left:548.00px;top:594.30px;font-size:9.4px;font-weight:bold;color:#222;transform:scaleX(0.9132);transform-origin:0 0;">Admin</div>
<div class="t" style="left:628.00px;top:494.00px;font-size:9.2px;font-weight:bold;color:#222;transform:scaleX(0.9936);transform-origin:0 0;">$2.2M</div>
<div class="t" style="left:609.80px;top:594.30px;font-size:9.4px;font-weight:bold;color:#222;transform:scaleX(0.9407);transform-origin:0 0;">Manufacturing</div>
<div class="t" style="left:706.70px;top:494.00px;font-size:9.2px;font-weight:bold;color:#222;transform:scaleX(0.9936);transform-origin:0 0;">$2.2M</div>
<div class="t" style="left:692.80px;top:594.30px;font-size:9.4px;font-weight:bold;color:#222;transform:scaleX(0.9142);transform-origin:0 0;">Procurement</div>
<div class="t" style="left:786.90px;top:497.00px;font-size:9.2px;font-weight:bold;color:#222;transform:scaleX(0.9936);transform-origin:0 0;">$2.1M</div>
<div class="t" style="left:789.50px;top:594.30px;font-size:9.4px;font-weight:bold;color:#222;transform:scaleX(0.9381);transform-origin:0 0;">R&amp;D</div>
<div class="t" style="left:865.90px;top:479.50px;font-size:9.2px;font-weight:bold;color:#222;transform:scaleX(0.9936);transform-origin:0 0;">$2.5M</div>
<div class="t" style="left:867.40px;top:594.30px;font-size:9.4px;font-weight:bold;color:#222;transform:scaleX(0.8998);transform-origin:0 0;">Sales</div>
<div class="t" style="left:944.80px;top:489.80px;font-size:9.2px;font-weight:bold;color:#222;transform:scaleX(0.9936);transform-origin:0 0;">$2.3M</div>
<div class="t" style="left:942.70px;top:594.30px;font-size:9.4px;font-weight:bold;color:#222;transform:scaleX(0.9089);transform-origin:0 0;">Service</div>
<div class="card" style="left:1034.2px;top:147.1px;width:186.4px;height:462px"></div>
<div class="t" style="left:1061.50px;top:159.50px;font-size:10.6px;font-weight:bold;color:#111;transform:scaleX(1.0029);transform-origin:0 0;">Maintenance Cost (USD) by</div>
<div class="t" style="left:1115.20px;top:170.80px;font-size:10.6px;font-weight:bold;color:#111;transform:scaleX(0.9911);transform-origin:0 0;">Month</div>
<div class="abs" style="left:1078px;top:200.2px;width:111.0px;height:22px;background:#ecd0dc;border-radius:0 1.5px 1.5px 0"></div>
<div class="t" style="left:1152.39px;top:205.85px;font-size:9.3px;font-weight:bold;color:#222;transform:scaleX(0.9576);transform-origin:0 0;">$327.8K</div>
<div class="t" style="left:1058.00px;top:205.55px;font-size:9.5px;font-weight:bold;color:#222;transform:scaleX(0.9290);transform-origin:0 0;">Apr</div>
<div class="abs" style="left:1078px;top:233.8px;width:62.9px;height:22px;background:#ecd0dc;border-radius:0 1.5px 1.5px 0"></div>
<div class="t" style="left:1104.31px;top:239.47px;font-size:9.3px;font-weight:bold;color:#222;transform:scaleX(0.9576);transform-origin:0 0;">$185.8K</div>
<div class="t" style="left:1056.20px;top:239.17px;font-size:9.5px;font-weight:bold;color:#222;transform:scaleX(0.9206);transform-origin:0 0;">Aug</div>
<div class="abs" style="left:1078px;top:267.4px;width:91.2px;height:22px;background:#ecd0dc;border-radius:0 1.5px 1.5px 0"></div>
<div class="t" style="left:1132.62px;top:273.09px;font-size:9.3px;font-weight:bold;color:#222;transform:scaleX(0.9576);transform-origin:0 0;">$269.4K</div>
<div class="t" style="left:1056.70px;top:272.79px;font-size:9.5px;font-weight:bold;color:#222;transform:scaleX(0.9468);transform-origin:0 0;">Dec</div>
<div class="abs" style="left:1078px;top:301.1px;width:56.1px;height:22px;background:#ecd0dc;border-radius:0 1.5px 1.5px 0"></div>
<div class="t" style="left:1097.51px;top:306.71px;font-size:9.3px;font-weight:bold;color:#222;transform:scaleX(0.9576);transform-origin:0 0;">$165.7K</div>
<div class="t" style="left:1057.70px;top:306.41px;font-size:9.5px;font-weight:bold;color:#222;transform:scaleX(0.9178);transform-origin:0 0;">Feb</div>
<div class="abs" style="left:1078px;top:334.7px;width:81.0px;height:22px;background:#ecd0dc;border-radius:0 1.5px 1.5px 0"></div>
<div class="t" style="left:1122.36px;top:340.33px;font-size:9.3px;font-weight:bold;color:#222;transform:scaleX(0.9576);transform-origin:0 0;">$239.1K</div>
<div class="t" style="left:1058.20px;top:340.03px;font-size:9.5px;font-weight:bold;color:#222;transform:scaleX(0.9164);transform-origin:0 0;">Jan</div>
<div class="abs" style="left:1078px;top:368.3px;width:75.2px;height:22px;background:#ecd0dc;border-radius:0 1.5px 1.5px 0"></div>
<div class="t" style="left:1116.64px;top:373.95px;font-size:9.3px;font-weight:bold;color:#222;transform:scaleX(0.9576);transform-origin:0 0;">$222.2K</div>
<div class="t" style="left:1060.70px;top:373.65px;font-size:9.5px;font-weight:bold;color:#222;transform:scaleX(0.9108);transform-origin:0 0;">Jul</div>
<div class="abs" style="left:1078px;top:401.9px;width:52.9px;height:22px;background:#ecd0dc;border-radius:0 1.5px 1.5px 0"></div>
<div class="t" style="left:1094.29px;top:407.57px;font-size:9.3px;font-weight:bold;color:#222;transform:scaleX(0.9576);transform-origin:0 0;">$156.2K</div>
<div class="t" style="left:1057.70px;top:407.27px;font-size:9.5px;font-weight:bold;color:#222;transform:scaleX(0.9178);transform-origin:0 0;">Jun</div>
<div class="abs" style="left:1078px;top:435.5px;width:87.6px;height:22px;background:#ecd0dc;border-radius:0 1.5px 1.5px 0"></div>
<div class="t" style="left:1129.00px;top:441.19px;font-size:9.3px;font-weight:bold;color:#222;transform:scaleX(0.9576);transform-origin:0 0;">$258.7K</div>
<div class="t" style="left:1057.20px;top:440.89px;font-size:9.5px;font-weight:bold;color:#222;transform:scaleX(0.9471);transform-origin:0 0;">Mar</div>
<div class="abs" style="left:1078px;top:469.2px;width:70.2px;height:22px;background:#ecd0dc;border-radius:0 1.5px 1.5px 0"></div>
<div class="t" style="left:1111.56px;top:474.81px;font-size:9.3px;font-weight:bold;color:#222;transform:scaleX(0.9576);transform-origin:0 0;">$207.2K</div>
<div class="t" style="left:1055.70px;top:474.51px;font-size:9.5px;font-weight:bold;color:#222;transform:scaleX(0.9469);transform-origin:0 0;">May</div>
<div class="abs" style="left:1078px;top:502.8px;width:63.5px;height:22px;background:#ecd0dc;border-radius:0 1.5px 1.5px 0"></div>
<div class="t" style="left:1104.85px;top:508.43px;font-size:9.3px;font-weight:bold;color:#222;transform:scaleX(0.9576);transform-origin:0 0;">$187.4K</div>
<div class="t" style="left:1056.70px;top:508.13px;font-size:9.5px;font-weight:bold;color:#222;transform:scaleX(0.9194);transform-origin:0 0;">Nov</div>
<div class="abs" style="left:1078px;top:536.4px;width:82.3px;height:22px;background:#ecd0dc;border-radius:0 1.5px 1.5px 0"></div>
<div class="t" style="left:1123.75px;top:542.05px;font-size:9.3px;font-weight:bold;color:#222;transform:scaleX(0.9576);transform-origin:0 0;">$243.2K</div>
<div class="t" style="left:1058.70px;top:541.75px;font-size:9.5px;font-weight:bold;color:#222;transform:scaleX(0.9156);transform-origin:0 0;">Oct</div>
<div class="abs" style="left:1078px;top:570.0px;width:56.5px;height:22px;background:#ecd0dc;border-radius:0 1.5px 1.5px 0"></div>
<div class="t" style="left:1097.91px;top:575.67px;font-size:9.3px;font-weight:bold;color:#222;transform:scaleX(0.9576);transform-origin:0 0;">$166.9K</div>
<div class="t" style="left:1057.70px;top:575.37px;font-size:9.5px;font-weight:bold;color:#222;transform:scaleX(0.8897);transform-origin:0 0;">Sep</div>
</body></html>
